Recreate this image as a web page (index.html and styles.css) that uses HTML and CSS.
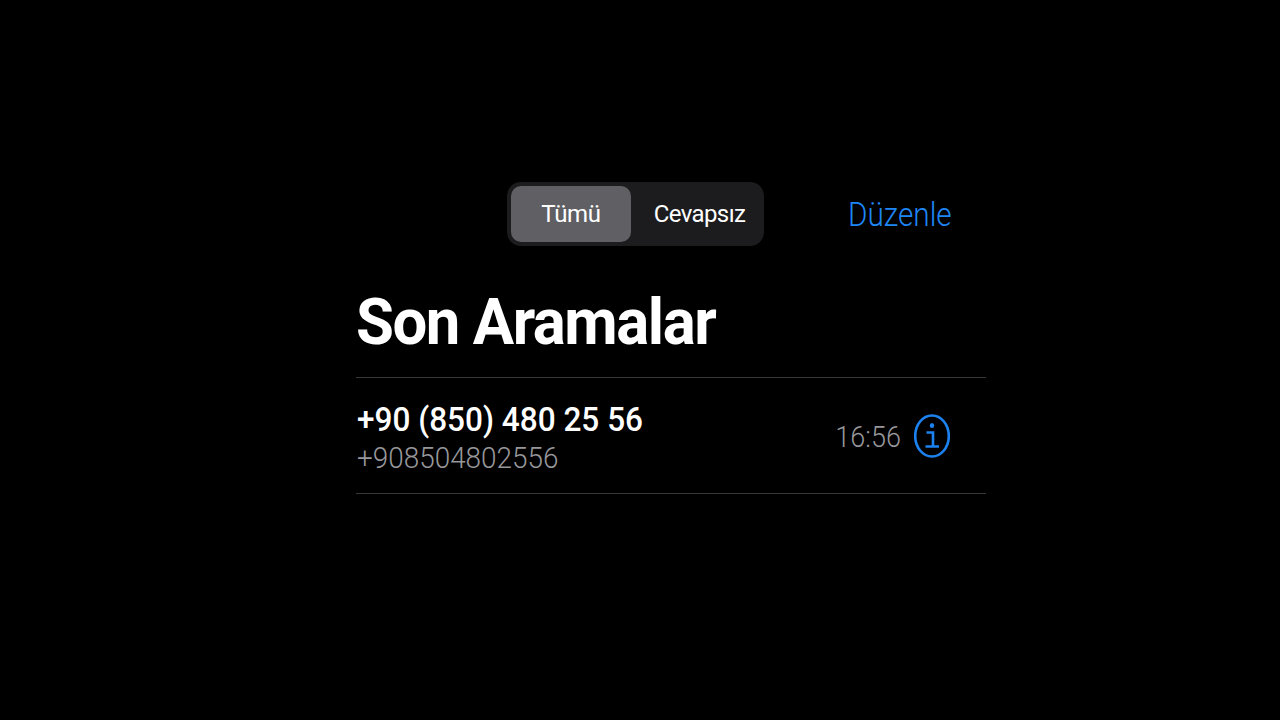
FILE: index.html
```html
<!DOCTYPE html>
<html lang="tr">
<head>
<meta charset="utf-8">
<title>Son Aramalar</title>
<link rel="stylesheet" href="styles.css">
</head>
<body>
<main class="screen">
  <header class="toolbar">
    <div class="segments">
      <button class="segment segment-active">Tümü</button>
      <button class="segment">Cevapsız</button>
    </div>
    <a class="edit">Düzenle</a>
  </header>
  <h1 class="title"><span class="title-text">Son Aramalar</span></h1>
  <ul class="calls">
    <li class="call">
      <div class="call-text">
        <div class="call-name">+90 (850) 480 25 56</div>
        <div class="call-number">+908504802556</div>
      </div>
      <time class="call-time">16:56</time>
      <svg class="info" viewBox="0 0 36 44" width="36" height="44" aria-hidden="true">
        <ellipse cx="18" cy="22" rx="16.8" ry="20.5" fill="none" stroke="#1c82f0" stroke-width="2.6"/>
        <ellipse cx="18" cy="11.5" rx="2.2" ry="2.5" fill="#1c82f0"/>
        <path d="M12.5 18.5H19V32.5M11.5 32.5H25" fill="none" stroke="#1c82f0" stroke-width="2.6"/>
      </svg>
    </li>
  </ul>
</main>
</body>
</html>
```
FILE: styles.css
```css
* { box-sizing: border-box; }
html, body { margin: 0; height: 100%; background: #000; }
body { font-family: Roboto, "Liberation Sans", sans-serif; color: #fff; overflow: hidden; }
.screen { width: 630px; margin-left: 356px; padding-top: 182px; }
.toolbar { display: flex; align-items: center; height: 64px; padding-left: 151px; }
.segments { display: flex; width: 257px; height: 64px; padding: 4px; background: #1c1c1f; border-radius: 14px; }
.segment { border: 0; background: transparent; color: #fff; font: 400 24px Roboto, sans-serif; padding: 0; border-radius: 10px; }
.segment-active { width: 120px; background: #5f5f64; letter-spacing: -0.3px; }
.segment:not(.segment-active) { flex: 1; padding-left: 8px; white-space: nowrap; letter-spacing: -0.6px; }
.edit { margin-left: 84px; color: #1f86f5; font-size: 33px; font-weight: 300; transform: scaleX(0.9); transform-origin: left center; }
.title { margin: 0; height: 132px; padding-top: 37px; font-size: 64px; line-height: 80px; font-weight: 700; border-bottom: 1px solid #38383a; }
.title-text { display: inline-block; letter-spacing: -1.5px; transform: scaleX(0.9625); transform-origin: left center; }
.calls { list-style: none; margin: 0; padding: 0; }
.call { display: flex; align-items: center; height: 116px; padding-right: 36px; border-bottom: 1px solid #38383a; }
.call-text { flex: 1; padding-top: 4px; padding-left: 1px; }
.call-name { font-size: 33px; line-height: 40px; font-weight: 500; transform: scaleX(0.956); transform-origin: left center; }
.call-number { font-size: 30px; line-height: 36px; font-weight: 300; color: #97979b; transform: scaleX(0.93); transform-origin: left center; }
.call-time { padding-top: 2px; font-size: 30px; font-weight: 300; color: #97979b; margin-right: 13px; transform: scaleX(0.9); transform-origin: right center; }
.info { display: block; }
```
